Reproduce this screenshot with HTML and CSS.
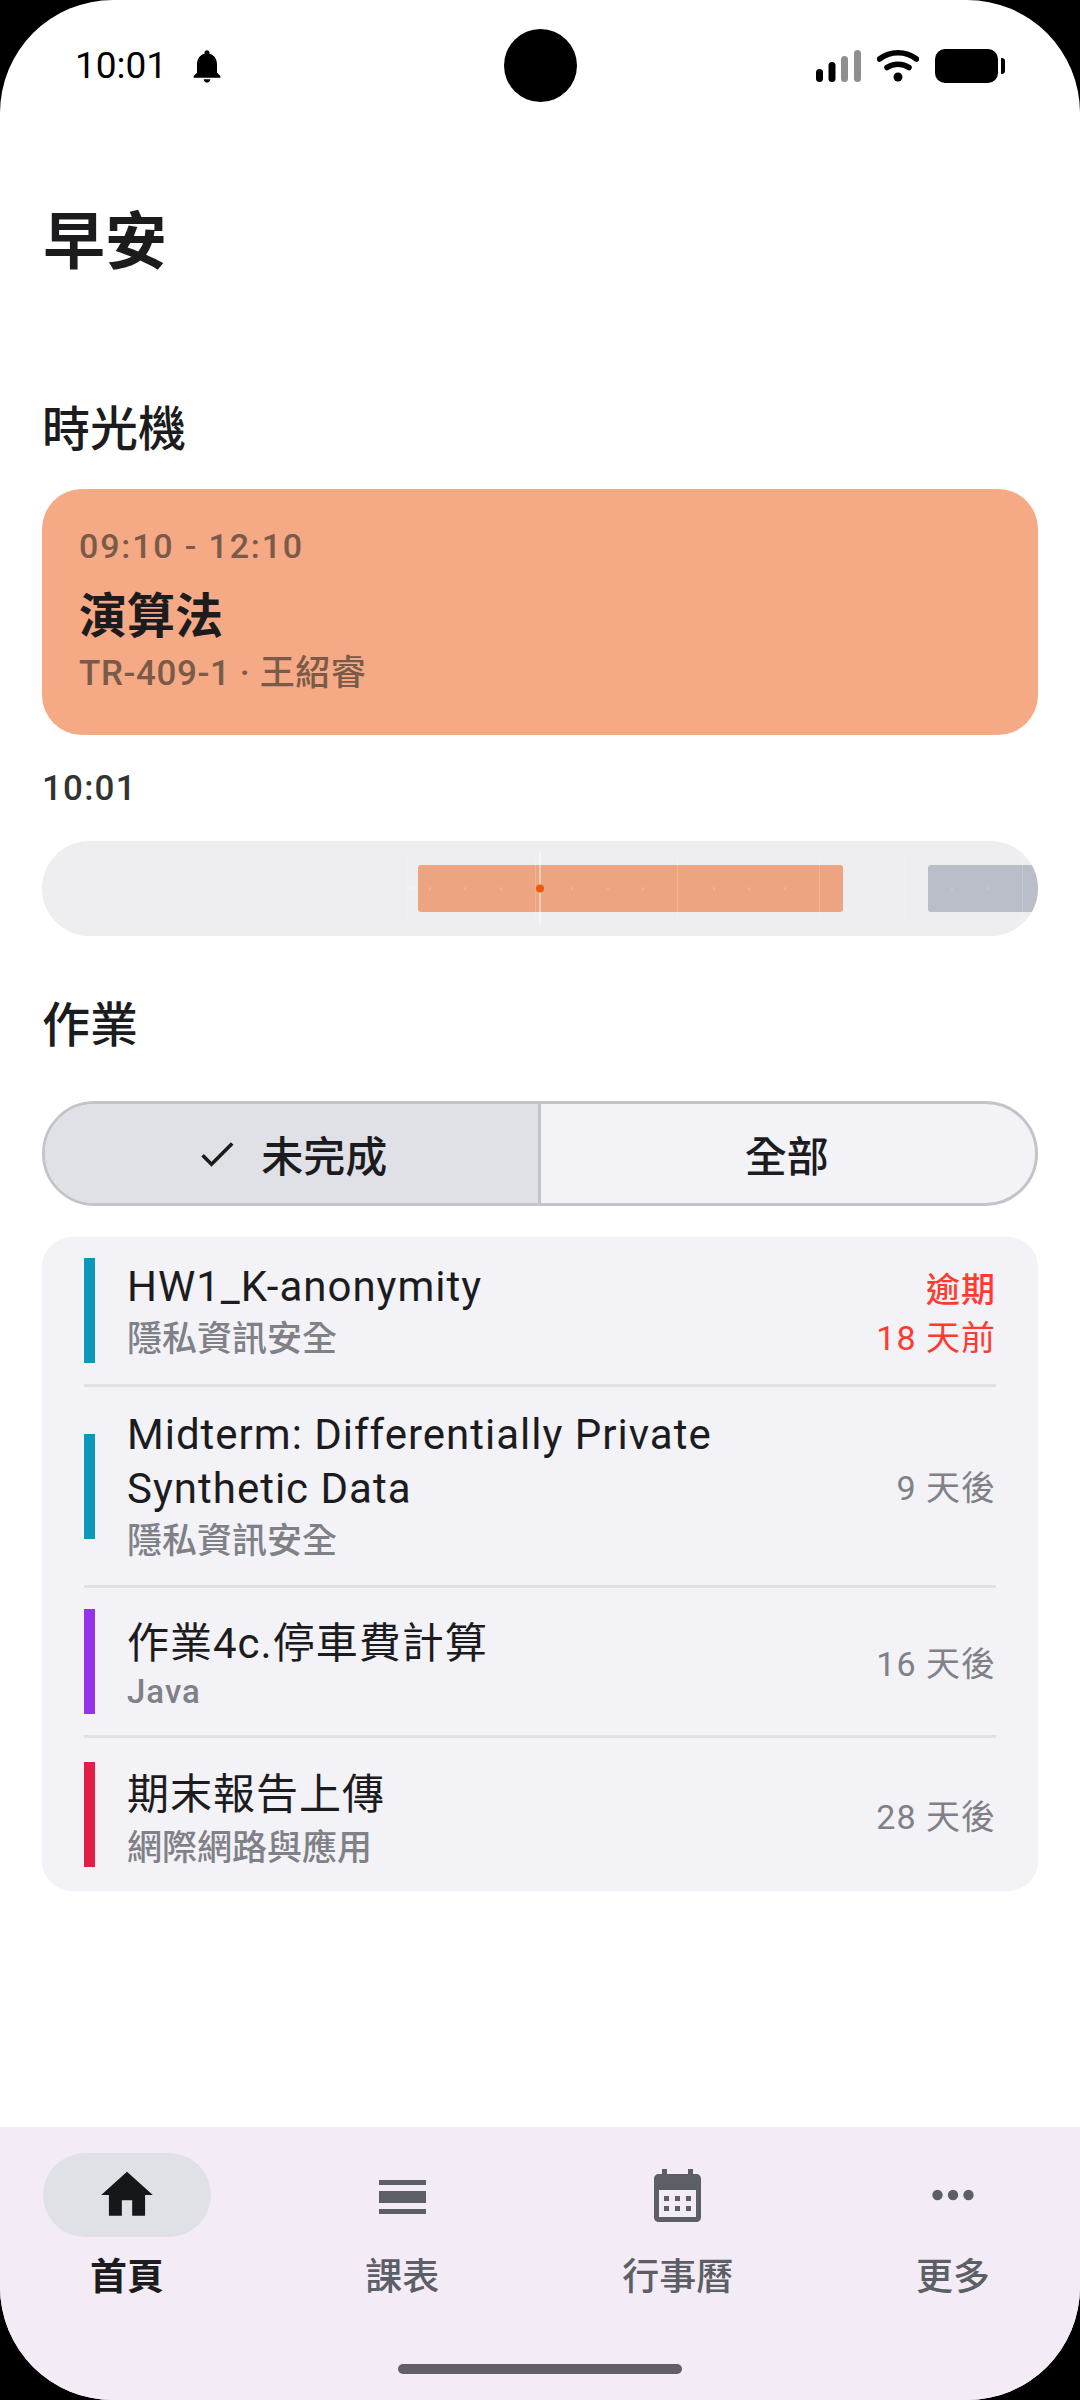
FILE: index.html
```html
<!DOCTYPE html>
<html lang="zh-Hant">
<head>
  <meta charset="UTF-8">
  <title>首頁</title>
  <link rel="stylesheet" href="styles.css">
</head>
<body>
  <div class="phone">

    <!-- barra de estado -->
    <div class="status">
      <div class="status-left">
        <span class="clock">10:01</span>
        <svg class="bell" viewBox="0 0 24 24"><path d="M12 22c1.100 0 2-.9 2-2h-4c0 1.100.9 2 2 2zm6-6v-5c0-3.070-1.630-5.640-4.500-6.320V4c0-.83-.67-1.500-1.500-1.500s-1.500.67-1.500 1.500v.68C7.640 5.360 6 7.920 6 11v5l-2 2v1h16v-1l-2-2z"/></svg>
      </div>
      <div class="camera"></div>
      <div class="status-right">
        <svg class="signal" viewBox="0 0 45 32">
          <rect x="0" y="19" width="7" height="13" rx="3.500" fill="#000"/>
          <rect x="12.500" y="12" width="7" height="20" rx="3.500" fill="#000"/>
          <rect x="25" y="6" width="7" height="26" rx="3.500" fill="#8f8f8f"/>
          <rect x="38" y="0" width="7" height="32" rx="3.500" fill="#8f8f8f"/>
        </svg>
        <svg class="wifi" viewBox="0 0 42 33">
          <path d="M2.500 10C13 1.500 29 1.500 39.500 10" fill="none" stroke="#000" stroke-width="5.500" stroke-linecap="round"/>
          <path d="M10 18.500C16 14 26 14 32 18.500" fill="none" stroke="#000" stroke-width="5.500" stroke-linecap="round"/>
          <circle cx="21" cy="28" r="4.500" fill="#000"/>
        </svg>
        <svg class="battery" viewBox="0 0 70 34">
          <rect x="0" y="0" width="63" height="34" rx="10" fill="#000"/>
          <path d="M66 9c3 0 4 1 4 3v10c0 2-1 3-4 3z" fill="#000"/>
        </svg>
      </div>
    </div>

    <main class="content">
      <h1 class="greeting">早安</h1>

      <h2 class="section-title machine-title">時光機</h2>
      <div class="course-card">
        <div class="course-time">09:10 - 12:10</div>
        <div class="course-name">演算法</div>
        <div class="course-info">TR-409-1 · 王紹睿</div>
      </div>

      <div class="now-label">10:01</div>

      <div class="timeline">
        <svg class="timeline-svg" viewBox="0 0 996 95">
          <rect x="376" y="24" width="425" height="47" rx="3" fill="#eca481"/>
          <rect x="886" y="24" width="130" height="47" rx="3" fill="#babec8"/>
          <g fill="#fff" opacity="0.18">
            <rect x="365" y="12" width="1" height="70"/>
            <rect x="493" y="12" width="1" height="70"/>
            <rect x="635" y="12" width="1" height="70"/>
            <rect x="777" y="12" width="1" height="70"/>
            <rect x="862" y="12" width="1" height="70"/>
            <rect x="980" y="12" width="1" height="70"/>
            <rect x="365" y="45" width="11" height="4"/>
          </g>
          <g fill="#fff" opacity="0.15">
            <rect x="387" y="46" width="2" height="3"/>
            <rect x="422" y="46" width="2" height="3"/>
            <rect x="458" y="46" width="2" height="3"/>
            <rect x="529" y="46" width="2" height="3"/>
            <rect x="565" y="46" width="2" height="3"/>
            <rect x="600" y="46" width="2" height="3"/>
            <rect x="671" y="46" width="2" height="3"/>
            <rect x="706" y="46" width="2" height="3"/>
            <rect x="742" y="46" width="2" height="3"/>
            <rect x="807" y="46" width="2" height="3"/>
            <rect x="825" y="46" width="2" height="3"/>
            <rect x="843" y="46" width="2" height="3"/>
            <rect x="880" y="46" width="2" height="3"/>
            <rect x="909" y="46" width="2" height="3"/>
            <rect x="945" y="46" width="2" height="3"/>
          </g>
          <rect x="497.500" y="11" width="1" height="73" fill="#fff" opacity="0.85"/>
          <ellipse cx="498" cy="47.500" rx="4" ry="4" fill="#ee5a0c"/>
        </svg>
      </div>

      <h2 class="section-title homework-title">作業</h2>

      <div class="segmented">
        <div class="segment segment-on">
          <svg class="check" viewBox="0 0 24 24"><path d="M9 16.170 4.830 12l-1.420 1.410L9 19 21 7l-1.410-1.410z"/></svg>
          <span>未完成</span>
        </div>
        <div class="segment segment-off"><span>全部</span></div>
      </div>

      <div class="task-list">
        <div class="task">
          <div class="task-bar bar-blue"></div>
          <div class="task-text">
            <div class="task-title">HW1_K-anonymity</div>
            <div class="task-course">隱私資訊安全</div>
          </div>
          <div class="task-due overdue">
            <strong>逾期</strong>
            <span>18 天前</span>
          </div>
        </div>
        <div class="task">
          <div class="task-bar bar-blue"></div>
          <div class="task-text">
            <div class="task-title">Midterm: Differentially Private<br>Synthetic Data</div>
            <div class="task-course">隱私資訊安全</div>
          </div>
          <div class="task-due">9 天後</div>
        </div>
        <div class="task task-mixed">
          <div class="task-bar bar-purple"></div>
          <div class="task-text">
            <div class="task-title">作業4c.停車費計算</div>
            <div class="task-course course-latin">Java</div>
          </div>
          <div class="task-due">16 天後</div>
        </div>
        <div class="task task-cjk">
          <div class="task-bar bar-red"></div>
          <div class="task-text">
            <div class="task-title">期末報告上傳</div>
            <div class="task-course">網際網路與應用</div>
          </div>
          <div class="task-due">28 天後</div>
        </div>
      </div>
    </main>

    <nav class="bottom-nav">
      <div class="nav-items">
        <div class="nav-item nav-active">
          <div class="nav-icon">
            <svg viewBox="0 0 24 24"><path d="M10 20v-6h4v6h5v-8h3L12 3 2 12h3v8z"/></svg>
          </div>
          <div class="nav-label">首頁</div>
        </div>
        <div class="nav-item">
          <div class="nav-icon">
            <svg viewBox="0 0 62 62"><path d="M8 16h47v5H8zM8 27h47v12H8zM8 45h47v5H8z"/></svg>
          </div>
          <div class="nav-label">課表</div>
        </div>
        <div class="nav-item">
          <div class="nav-icon">
            <svg viewBox="0 0 62 62"><path fill-rule="evenodd" d="M15 5h5v5h21V5h5v5h3c3 0 5 2 5 5v38c0 3-2 5-5 5H12c-3 0-5-2-5-5V15c0-3 2-5 5-5h3zM12 26v27h37V26zM17 32h5v5h-5zM28 32h5v5h-5zM39 32h5v5h-5zM17 42h5v5h-5zM28 42h5v5h-5zM39 42h5v5h-5z"/></svg>
          </div>
          <div class="nav-label">行事曆</div>
        </div>
        <div class="nav-item">
          <div class="nav-icon">
            <svg viewBox="0 0 24 24"><circle cx="6" cy="12" r="2"/><circle cx="12" cy="12" r="2"/><circle cx="18" cy="12" r="2"/></svg>
          </div>
          <div class="nav-label">更多</div>
        </div>
      </div>
      <div class="home-bar"></div>
    </nav>
  </div>
</body>
</html>
```

FILE: styles.css
```css
* {
  box-sizing: border-box;
}
html, body {
  margin: 0;
  padding: 0;
  background-color: #000;
}
body {
  font-family: Roboto, "Noto Sans CJK TC", sans-serif;
  color: #1c1c1e;
}
.phone {
  width: 1080px;
  height: 2400px;
  background-color: #fff;
  border-radius: 113px;
  overflow: hidden;
  display: flex;
  flex-direction: column;
}

/* status */
.status {
  height: 132px;
  flex: none;
  padding: 29px 75px 0;
  display: grid;
  grid-template-columns: 1fr 73px 1fr;
  align-items: start;
}
.status-left {
  height: 73px;
  display: flex;
  align-items: center;
  gap: 20px;
}
.clock {
  font-size: 37px;
  color: #000;
}
.bell {
  width: 40px;
  height: 40px;
}
.camera {
  width: 73px;
  height: 73px;
  border-radius: 50%;
  background-color: #000;
}
.status-right {
  height: 73px;
  display: flex;
  justify-content: flex-end;
  align-items: center;
  gap: 16px;
}
.signal {
  width: 45px;
  height: 32px;
}
.wifi {
  width: 42px;
  height: 33px;
}
.battery {
  width: 70px;
  height: 34px;
}

/* contenido */
.content {
  flex: 1;
  padding: 0 42px;
}
h1, h2 {
  margin: 0;
}
.greeting {
  font-size: 62px;
  line-height: 80px;
  font-weight: 700;
  padding-left: 1px;
  margin-top: 71px;
}
.section-title {
  font-size: 48px;
  line-height: 60px;
  font-weight: 500;
}
.machine-title {
  margin-top: 117px;
}
.course-card {
  margin-top: 29px;
  height: 246px;
  border-radius: 40px;
  background-color: #f5a984;
  padding: 37px 37px 0;
}
.course-time {
  font-size: 34px;
  line-height: 40px;
  font-weight: 500;
  letter-spacing: 1.85px;
  color: #7a5a49;
}
.course-name {
  font-size: 48px;
  line-height: 60px;
  font-weight: 700;
  margin-top: 21px;
}
.course-info {
  font-size: 35px;
  line-height: 44px;
  font-weight: 500;
  letter-spacing: 0.6px;
  color: #7a5a49;
  margin-top: 5px;
}
.now-label {
  font-size: 35px;
  line-height: 44px;
  font-weight: 500;
  letter-spacing: 1.2px;
  color: #333;
  margin-top: 32px;
}
.timeline {
  margin-top: 30px;
  height: 95px;
  border-radius: 48px;
  background-color: #eeeef0;
  overflow: hidden;
}
.timeline-svg {
  display: block;
  width: 996px;
  height: 95px;
}
.homework-title {
  margin-top: 60px;
}

/* filtro */
.segmented {
  margin-top: 45px;
  height: 105px;
  border: 3px solid #c4c4c8;
  border-radius: 53px;
  background-color: #f2f2f7;
  overflow: hidden;
  display: flex;
}
.segment {
  flex: 1;
  display: flex;
  align-items: center;
  justify-content: center;
  gap: 22px;
  font-size: 42px;
  font-weight: 500;
}
.segment-on {
  background-color: #e0e1e6;
  border-right: 3px solid #c4c4c8;
}
.segment-off {
  padding-right: 2px;
}
.check {
  width: 44px;
  height: 44px;
  fill: #1c1c1e;
}

/* tareas */
.task-list {
  margin-top: 31px;
  background-color: #f2f2f7;
  border-radius: 30px;
  padding: 0 42px;
}
.task {
  display: flex;
  align-items: center;
  padding: 21px 0;
  border-bottom: 3px solid #e0e0e5;
}
.task:last-child {
  border-bottom: none;
  padding: 24px 0;
}
.task-bar {
  width: 11px;
  height: 105px;
  flex: none;
}
.bar-blue {
  background-color: #0e97b8;
}
.bar-purple {
  background-color: #9333ea;
}
.bar-red {
  background-color: #e11d48;
}
.task-text {
  flex: 1;
  padding-left: 32px;
  margin-bottom: -2px;
}
.task-title {
  font-size: 42px;
  line-height: 54px;
  letter-spacing: 1px;
}
.task-course {
  font-size: 35px;
  line-height: 48px;
  font-weight: 500;
  color: #808087;
  margin-top: 2px;
}
.course-latin {
  font-size: 33px;
  letter-spacing: 1px;
}
/* las filas con titulo en chino quedan mas abajo */
.task-cjk .task-text {
  margin-top: 4px;
  margin-bottom: -7px;
}
.task-cjk .task-course {
  margin-top: 3px;
}
.task-mixed .task-text {
  margin-top: 6px;
  margin-bottom: -3px;
}
.task-mixed .task-course {
  margin-top: -3px;
}
.task-due {
  font-size: 34px;
  line-height: 48px;
  color: #808087;
  text-align: right;
  letter-spacing: 1px;
  margin-top: 2px;
  margin-bottom: -2px;
}
.overdue {
  color: #ff3b30;
  margin-top: 3px;
  margin-bottom: -3px;
}
.overdue strong, .overdue span {
  display: block;
}
.overdue strong {
  font-weight: 500;
}

/* navegacion */
.bottom-nav {
  flex: none;
  height: 273px;
  background-color: #f3ecf7;
  padding: 26px 43px 0;
  position: relative;
}
.nav-items {
  display: flex;
  justify-content: space-between;
}
.nav-item {
  width: 168px;
  display: flex;
  flex-direction: column;
  align-items: center;
  color: #5c5f66;
}
.nav-icon {
  width: 168px;
  height: 84px;
  border-radius: 42px;
  display: flex;
  align-items: center;
  justify-content: center;
}
.nav-icon svg {
  width: 62px;
  height: 62px;
  fill: #5c5f66;
}
.nav-active {
  color: #1c1c1e;
}
.nav-active .nav-icon {
  background-color: #e0e1e6;
}
.nav-active .nav-icon svg {
  fill: #16171b;
}
.nav-label {
  font-size: 37px;
  line-height: 48px;
  font-weight: 500;
  margin-top: 17px;
}
.nav-active .nav-label {
  font-weight: 700;
}
.home-bar {
  position: absolute;
  left: 398px;
  bottom: 26px;
  width: 284px;
  height: 10px;
  border-radius: 5px;
  background-color: #625f66;
}
```
